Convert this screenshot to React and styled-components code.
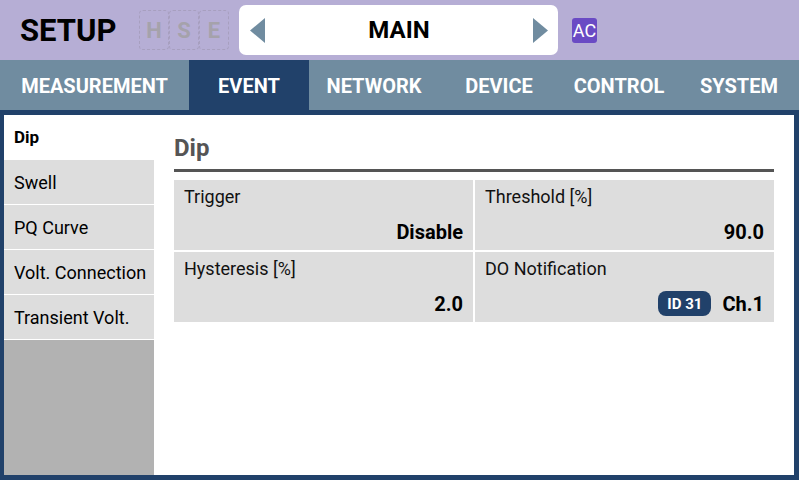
import React from "react";
import styled, { createGlobalStyle } from "styled-components";

const GlobalStyle = createGlobalStyle`
  html, body {
    margin: 0;
    padding: 0;
    background: #fff;
  }
  body {
    font-family: Roboto, "Liberation Sans", sans-serif;
  }
`;

const Screen = styled.div`
  width: 799px;
  height: 480px;
  display: flex;
  flex-direction: column;
  overflow: hidden;
`;

const Header = styled.div`
  height: 60px;
  background: #b6aed5;
  display: flex;
  align-items: center;
  padding-left: 20px;
  box-sizing: border-box;
`;

const Title = styled.div`
  font-size: 31px;
  font-weight: 700;
  color: #000;
  width: 119px;
`;

const Modes = styled.div`
  display: flex;
  height: 40px;
`;

const ModeBox = styled.div`
  width: 30px;
  height: 40px;
  box-sizing: border-box;
  border: 1px dashed #a79fbf;
  border-radius: 4px;
  display: flex;
  align-items: center;
  justify-content: center;
  font-size: 22px;
  font-weight: 700;
  color: #a5a2ab;
`;

const Selector = styled.div`
  margin-left: 10px;
  width: 319px;
  height: 50px;
  background: #fff;
  border-radius: 7px;
  display: flex;
  align-items: center;
  justify-content: space-between;
  padding: 0 10px 0 11px;
  box-sizing: border-box;
`;

const SelectorLabel = styled.div`
  font-size: 24px;
  font-weight: 700;
  color: #000;
`;

const Arrow = styled.svg`
  width: 15px;
  height: 25px;
  fill: #708ca0;
  display: block;
`;

const AcBadge = styled.div`
  margin-left: 14px;
  width: 25px;
  height: 25px;
  border-radius: 3px;
  background: #6a4bc4;
  color: #fff;
  font-size: 18px;
  display: flex;
  align-items: center;
  justify-content: center;
`;

const TabBar = styled.div`
  height: 50px;
  background: #708ca0;
  display: flex;
`;

const Tab = styled.div`
  width: ${(p) => p.$w}px;
  flex: none;
  background: ${(p) => (p.$active ? "#21416a" : "transparent")};
  color: #fff;
  font-size: 20px;
  font-weight: 700;
  display: flex;
  align-items: center;
  justify-content: center;
  padding-top: 1px;
  box-sizing: border-box;
`;

const Frame = styled.div`
  flex: 1;
  min-height: 0;
  border-style: solid;
  border-color: #21416a;
  border-width: 5px 5px 5px 4px;
  display: flex;
  background: #fff;
`;

const Sidebar = styled.div`
  width: 150px;
  background: #b2b2b2;
  display: flex;
  flex-direction: column;
`;

const SideItem = styled.div`
  flex: none;
  height: 45px;
  box-sizing: border-box;
  border-bottom: 1px solid #fff;
  background: #dddddd;
  font-size: 18px;
  color: #000;
  padding-left: 10px;
  display: flex;
  align-items: center;
  ${(p) =>
    p.$active &&
    `
    background: #fff;
    border-bottom: none;
    font-size: 17px;
    font-weight: 700;
    align-items: flex-start;
    padding-top: 12px;
  `}
`;

const Content = styled.div`
  flex: 1;
  padding: 18px 20px 0 20px;
`;

const PageTitle = styled.div`
  font-size: 24px;
  font-weight: 700;
  color: #555;
  line-height: 30px;
  border-bottom: 3px solid #555;
  box-sizing: border-box;
  height: 39px;
`;

const Grid = styled.div`
  margin-top: 8px;
  display: grid;
  grid-template-columns: 299px 299px;
  grid-auto-rows: 70px;
  gap: 2px;
`;

const Cell = styled.div`
  background: #dddddd;
  display: flex;
  flex-direction: column;
  justify-content: space-between;
  padding: 6px 10px 6px 10px;
  box-sizing: border-box;
`;

const Label = styled.div`
  font-size: 18px;
  color: #111;
`;

const Value = styled.div`
  font-size: 20px;
  font-weight: 700;
  color: #000;
  display: flex;
  align-items: center;
  justify-content: flex-end;
  gap: 11px;
`;

const IdBadge = styled.span`
  background: #21416a;
  color: #fff;
  font-size: 15px;
  font-weight: 700;
  height: 25px;
  padding: 0 9px;
  border-radius: 8px;
  display: inline-flex;
  align-items: center;
`;

const tabs = [
  { name: "MEASUREMENT", w: 189 },
  { name: "EVENT", w: 120, active: true },
  { name: "NETWORK", w: 130 },
  { name: "DEVICE", w: 120 },
  { name: "CONTROL", w: 120 },
  { name: "SYSTEM", w: 120 },
];

const menu = ["Dip", "Swell", "PQ Curve", "Volt. Connection", "Transient Volt."];

export default function App() {
  return (
    <>
      <GlobalStyle />
      <Screen>
        <Header>
          <Title>SETUP</Title>
          <Modes>
            <ModeBox>H</ModeBox>
            <ModeBox>S</ModeBox>
            <ModeBox>E</ModeBox>
          </Modes>
          <Selector>
            <Arrow viewBox="0 0 15 25">
              <polygon points="15,0 15,25 0,12.5" />
            </Arrow>
            <SelectorLabel>MAIN</SelectorLabel>
            <Arrow viewBox="0 0 15 25">
              <polygon points="0,0 0,25 15,12.5" />
            </Arrow>
          </Selector>
          <AcBadge>AC</AcBadge>
        </Header>
        <TabBar>
          {tabs.map((t) => (
            <Tab key={t.name} $w={t.w} $active={t.active}>
              {t.name}
            </Tab>
          ))}
        </TabBar>
        <Frame>
          <Sidebar>
            {menu.map((m, i) => (
              <SideItem key={m} $active={i === 0}>
                {m}
              </SideItem>
            ))}
          </Sidebar>
          <Content>
            <PageTitle>Dip</PageTitle>
            <Grid>
              <Cell>
                <Label>Trigger</Label>
                <Value>Disable</Value>
              </Cell>
              <Cell>
                <Label>Threshold [%]</Label>
                <Value>90.0</Value>
              </Cell>
              <Cell>
                <Label>Hysteresis [%]</Label>
                <Value>2.0</Value>
              </Cell>
              <Cell>
                <Label>DO Notification</Label>
                <Value>
                  <IdBadge>ID 31</IdBadge>
                  Ch.1
                </Value>
              </Cell>
            </Grid>
          </Content>
        </Frame>
      </Screen>
    </>
  );
}
